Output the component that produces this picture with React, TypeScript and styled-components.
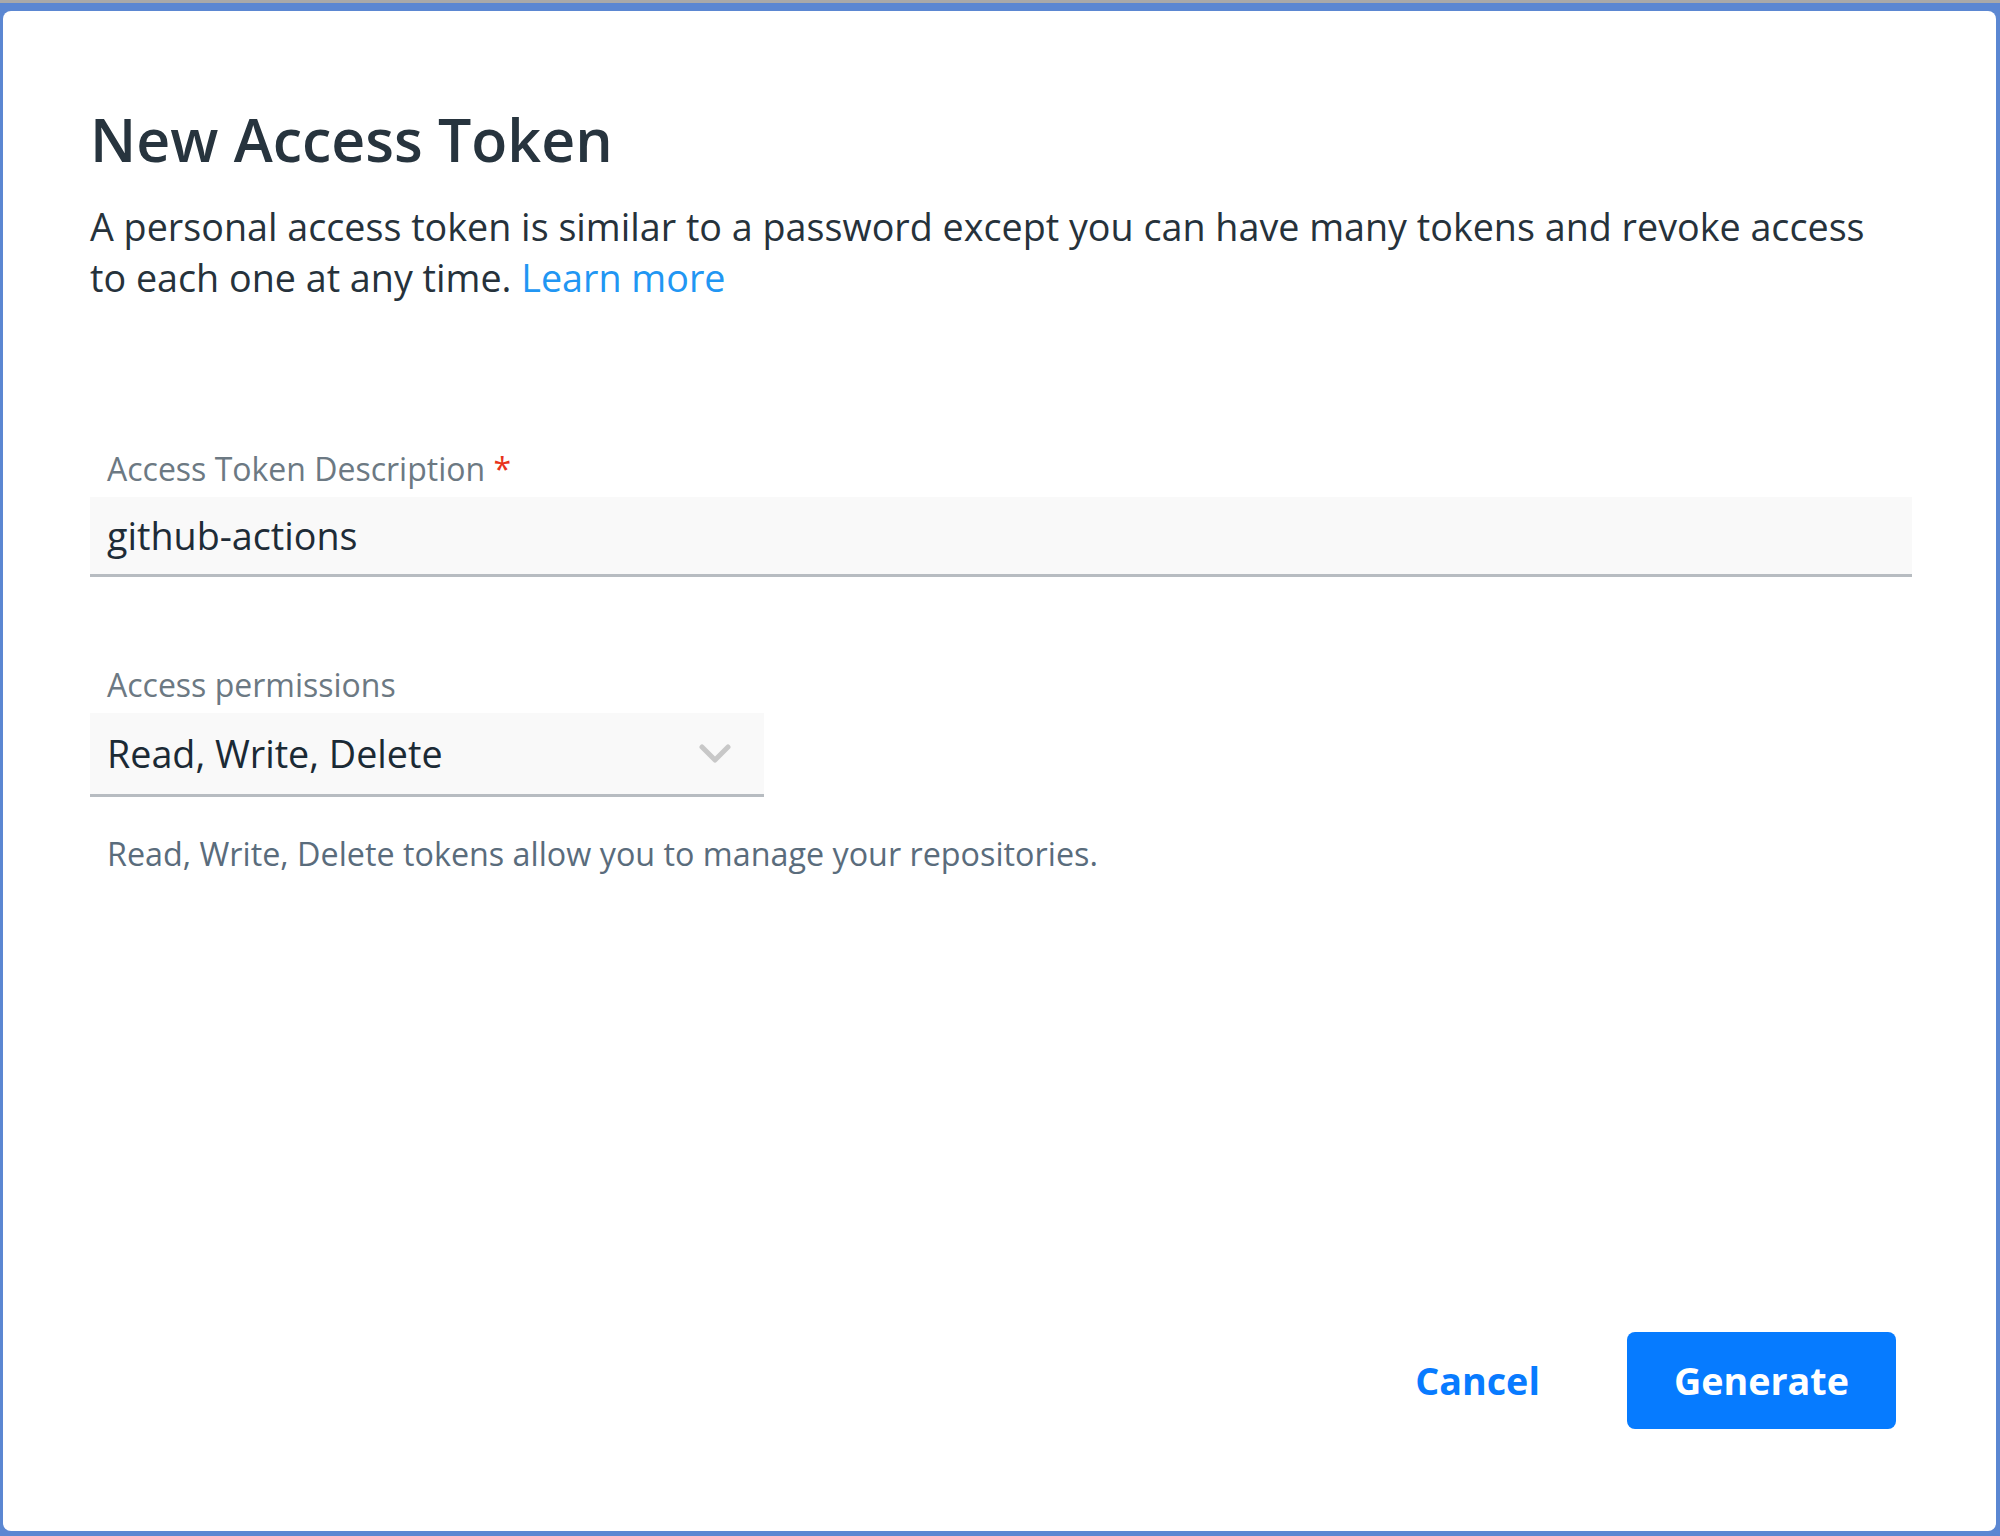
import React from "react";
import styled, {createGlobalStyle} from "styled-components";

const GlobalStyle = createGlobalStyle`
    html, body, #root {
        height: 100%;
    }
    body {
        margin: 0;
        background: #5b87d2;
        font-family: "Open Sans", "Noto Sans", sans-serif;
        border-top: 3px solid #a9a9a9;
        box-sizing: border-box;
    }
    * {
        box-sizing: border-box;
    }
`;

const Page = styled.div`
    height: 100%;
    padding: 8px 4px 5px 3px;
    display: flex;
`;

const Card = styled.div`
    flex: 1;
    background: #fff;
    border-radius: 8px;
    padding: 92px 84px 102px 87px;
    display: flex;
    flex-direction: column;
`;

const Title = styled.h1`
    margin: 0;
    font-size: 59px;
    line-height: 72px;
    font-weight: 600;
    color: #27343e;
`;

const Intro = styled.p`
    margin: 26px 0 0;
    max-width: 1800px;
    font-size: 37.7px;
    line-height: 51px;
    color: #26323b;
`;

const Link = styled.a`
    color: #2196f3;
    text-decoration: none;
`;

const Field = styled.div<{ $top: number }>`
    margin-top: ${p => p.$top}px;
    display: flex;
    flex-direction: column;
`;

const Label = styled.label`
    font-size: 32px;
    line-height: 42px;
    color: #6c7983;
    padding-left: 17px;
    margin-bottom: 7px;
`;

const Required = styled.span`
    color: #e8341c;
`;

const TextInput = styled.input`
    height: 80px;
    width: 100%;
    border: none;
    border-bottom: 3px solid #b7bcc1;
    background: #f9f9f9;
    padding: 0 17px;
    font-family: inherit;
    font-size: 37.7px;
    color: #1e2c37;
    outline: none;
`;

const Select = styled.div`
    width: 674px;
    height: 84px;
    border-bottom: 3px solid #b7bcc1;
    background: #f9f9f9;
    padding: 0 33px 0 17px;
    display: flex;
    align-items: center;
    justify-content: space-between;
    font-size: 37.7px;
    color: #1b2a35;
`;

const Helper = styled.div`
    margin-top: 35px;
    padding-left: 17px;
    font-size: 32.3px;
    line-height: 42px;
    color: #5a6c7c;
`;

const Spacer = styled.div`
    flex: 1;
`;

const Footer = styled.div`
    display: flex;
    justify-content: flex-end;
    align-items: center;
    gap: 40px;
    padding-right: 16px;
`;

const Button = styled.button<{ $primary?: boolean }>`
    height: 97px;
    padding: 0 47px;
    border: none;
    border-radius: 8px;
    font-family: inherit;
    font-size: 37.7px;
    font-weight: 700;
    background: ${p => p.$primary ? "#067bff" : "transparent"};
    color: ${p => p.$primary ? "#fff" : "#087bff"};
    cursor: pointer;
`;

function Chevron() {
    return <svg width="32" height="20" viewBox="0 0 32 20" fill="none">
        <path d="M3 3 L16 16 L29 3" stroke="#c8c8c8" strokeWidth="5"
              strokeLinecap="round" strokeLinejoin="round"/>
    </svg>;
}

export default function App() {
    return <Page>
        <GlobalStyle/>
        <Card>
            <Title>New Access Token</Title>
            <Intro>
                A personal access token is similar to a password except you can have many tokens and revoke access
                to each one at any time. <Link href="#">Learn more</Link>
            </Intro>
            <Field $top={145}>
                <Label>Access Token Description <Required>*</Required></Label>
                <TextInput defaultValue="github-actions"/>
            </Field>
            <Field $top={87}>
                <Label>Access permissions</Label>
                <Select>
                    <span>Read, Write, Delete</span>
                    <Chevron/>
                </Select>
            </Field>
            <Helper>Read, Write, Delete tokens allow you to manage your repositories.</Helper>
            <Spacer/>
            <Footer>
                <Button>Cancel</Button>
                <Button $primary>Generate</Button>
            </Footer>
        </Card>
    </Page>;
}
